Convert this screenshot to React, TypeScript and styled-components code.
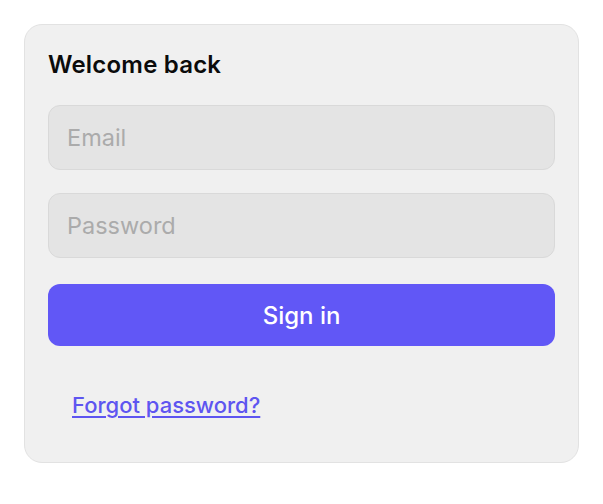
import React from 'react';
import styled, {createGlobalStyle} from 'styled-components';

const GlobalStyle = createGlobalStyle`
  html, body {
    margin: 0;
    padding: 0;
    background: #ffffff;
    font-family: Inter, "Noto Sans", "Liberation Sans", sans-serif;
  }
`;

const Page = styled.div`
  padding: 24px 24px;
  width: 603px;
  box-sizing: border-box;
`;

const Card = styled.form`
  width: 555px;
  box-sizing: border-box;
  background: #f0f0f0;
  border: 1px solid #e2e2e2;
  border-radius: 18px;
  padding: 24px 23px 44px 23px;
  display: flex;
  flex-direction: column;
`;

const Title = styled.h2`
  margin: 0 0 24px 0;
  font-size: 24px;
  line-height: 32px;
  font-weight: 600;
  color: #0b0b0b;
  letter-spacing: 0.2px;
`;

const Field = styled.input`
  height: 65px;
  box-sizing: border-box;
  width: 100%;
  margin-bottom: 23px;
  padding: 0 18px;
  background: #e4e4e4;
  border: 1px solid #d9d9d9;
  border-radius: 12px;
  font-family: inherit;
  font-size: 23.5px;
  color: #222;
  outline: none;

  &::placeholder {
    color: #ababab;
  }
`;

const SubmitButton = styled.button`
  margin-top: 3px;
  height: 62px;
  width: 100%;
  border: none;
  border-radius: 12px;
  background: #6157f6;
  color: #ffffff;
  font-family: inherit;
  font-size: 24px;
  font-weight: 500;
  cursor: pointer;
`;

const LinkRow = styled.div`
  padding: 46px 24px 0 24px;
`;

const ForgotLink = styled.a`
  font-size: 22px;
  line-height: 26px;
  font-weight: 500;
  color: #5e55f0;
  text-decoration: underline;
  text-underline-offset: 3px;
  cursor: pointer;
`;

export default function App() {
    return (
        <Page>
            <GlobalStyle/>
            <Card onSubmit={e => e.preventDefault()}>
                <Title>Welcome back</Title>
                <Field type="email" placeholder="Email"/>
                <Field type="password" placeholder="Password"/>
                <SubmitButton type="submit">Sign in</SubmitButton>
                <LinkRow>
                    <ForgotLink>Forgot password?</ForgotLink>
                </LinkRow>
            </Card>
        </Page>
    );
}
